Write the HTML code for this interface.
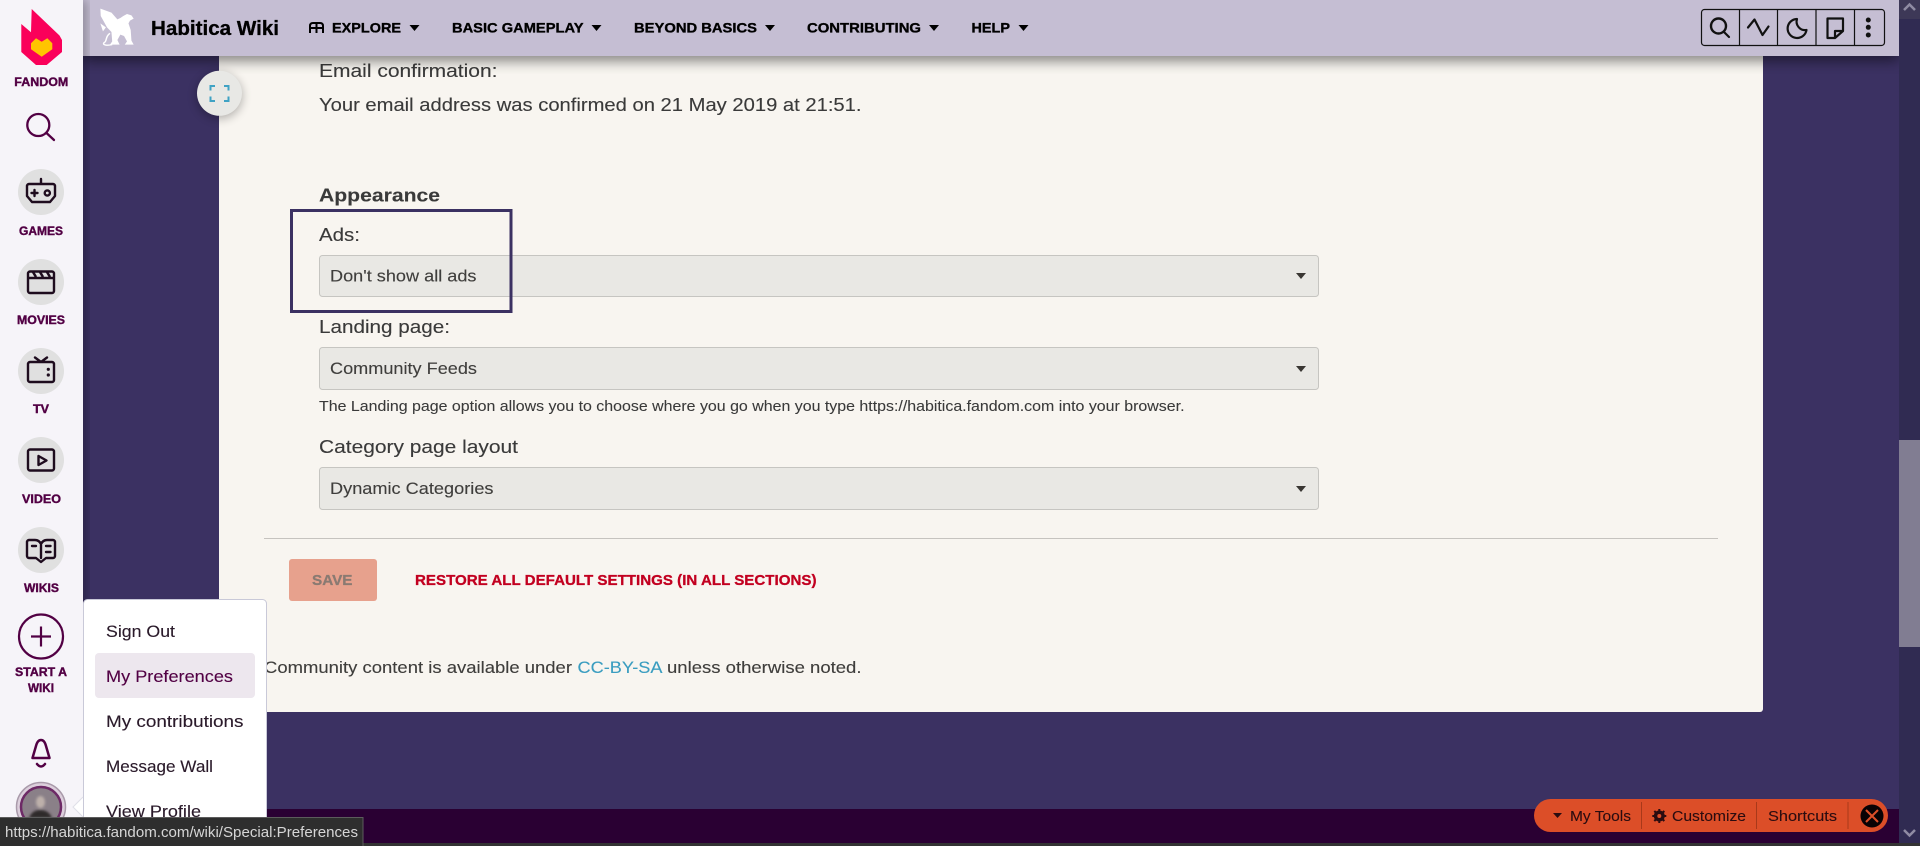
<!DOCTYPE html>
<html lang="en"><head><meta charset="utf-8"><title>My Preferences - Habitica Wiki</title>
<style>
html,body{margin:0;padding:0;background:#3b3162;overflow:hidden;width:1920px;height:846px}
svg{display:block}
text{font-family:"Liberation Sans",sans-serif;white-space:pre}
.b{font-size:18px;fill:#3a3a3a;stroke:#3a3a3a;stroke-width:.12}
.s{font-size:16.5px;fill:#3f3e3c;stroke:#3f3e3c;stroke-width:.12}
.n{font-size:14px;font-weight:700;fill:#000;stroke:#000;stroke-width:.35}
.l{font-size:12px;font-weight:700;fill:#520044;stroke:#520044;stroke-width:.4;text-anchor:start}
.d{font-size:16.5px;fill:#2a1a2a;stroke:#2a1a2a;stroke-width:.12}
.t{font-size:15px;fill:#2a0c10;stroke:#2a0c10;stroke-width:.1}
.i{fill:none;stroke:#1e0c1e;stroke-width:2.400;stroke-linecap:round;stroke-linejoin:round}
.k{fill:none;stroke:#111;stroke-width:2.200;stroke-linecap:round;stroke-linejoin:round}
</style></head><body>
<svg xmlns="http://www.w3.org/2000/svg" width="1920" height="846" viewBox="0 0 1920 846">
<defs>
<filter id="sh" x="-20%" y="-50%" width="140%" height="250%"><feGaussianBlur stdDeviation="7"/></filter>
<filter id="sh2" x="-50%" y="-50%" width="200%" height="200%"><feGaussianBlur stdDeviation="5"/></filter>
<filter id="bl" x="-30%" y="-30%" width="160%" height="160%"><feGaussianBlur stdDeviation="1.200"/></filter>
</defs>
<rect width="1920" height="846" fill="#3b3162"/>
<!-- panel -->
<rect x="219" y="0" width="1544" height="712" rx="3" fill="#f8f5f0"/>
<!-- footer band -->
<rect x="83" y="809" width="1816" height="34" fill="#2a0033"/>
<!-- content -->
<text class="b" x="319" y="77" textLength="178.500" lengthAdjust="spacingAndGlyphs">Email confirmation:</text>
<text class="b" x="319" y="111" textLength="542.500" lengthAdjust="spacingAndGlyphs">Your email address was confirmed on 21 May 2019 at 21:51.</text>
<text class="b" x="319" y="201.500" font-weight="700" textLength="121" lengthAdjust="spacingAndGlyphs">Appearance</text>
<text class="b" x="319" y="241" textLength="41" lengthAdjust="spacingAndGlyphs">Ads:</text>
<rect x="319.500" y="255.500" width="999" height="41" rx="3" fill="#e9e8e4" stroke="#c6c5c1"/>
<text class="s" x="330" y="281.500" textLength="146.500" lengthAdjust="spacingAndGlyphs">Don't show all ads</text>
<path d="M1296,273 h10 l-5,6 z" fill="#3a3733"/>
<text class="b" x="319" y="333" textLength="131" lengthAdjust="spacingAndGlyphs">Landing page:</text>
<rect x="319.500" y="347.500" width="999" height="42" rx="3" fill="#e9e8e4" stroke="#c6c5c1"/>
<text class="s" x="330" y="374" textLength="147" lengthAdjust="spacingAndGlyphs">Community Feeds</text>
<path d="M1296,366 h10 l-5,6 z" fill="#3a3733"/>
<text x="319" y="411" font-size="14.500" fill="#3a3a3a" stroke="#3a3a3a" stroke-width=".08" textLength="865.500" lengthAdjust="spacingAndGlyphs">The Landing page option allows you to choose where you go when you type https://habitica.fandom.com into your browser.</text>
<text class="b" x="319" y="453" textLength="199" lengthAdjust="spacingAndGlyphs">Category page layout</text>
<rect x="319.500" y="467.500" width="999" height="42" rx="3" fill="#e9e8e4" stroke="#c6c5c1"/>
<text class="s" x="330" y="494" textLength="163.500" lengthAdjust="spacingAndGlyphs">Dynamic Categories</text>
<path d="M1296,486 h10 l-5,6 z" fill="#3a3733"/>
<rect x="291.500" y="210.500" width="219.500" height="101" fill="none" stroke="#3b3162" stroke-width="3"/>
<rect x="264" y="538" width="1454" height="1" fill="#c6c3bf"/>
<rect x="289" y="559" width="88" height="42" rx="3" fill="#e7a18d"/>
<text x="312" y="585" font-size="15" font-weight="700" fill="#8a7a72" stroke="#8a7a72" stroke-width=".3" textLength="40.500" lengthAdjust="spacingAndGlyphs">SAVE</text>
<text x="415" y="585" font-size="15" font-weight="700" fill="#c20020" stroke="#c20020" stroke-width=".3" textLength="401.500" lengthAdjust="spacingAndGlyphs">RESTORE ALL DEFAULT SETTINGS (IN ALL SECTIONS)</text>
<text class="s" x="264" y="673" textLength="308" lengthAdjust="spacingAndGlyphs">Community content is available under</text>
<text class="s" x="577.500" y="673" style="fill:#3a9dc0;stroke:#3a9dc0" textLength="85" lengthAdjust="spacingAndGlyphs">CC-BY-SA</text>
<text class="s" x="667" y="673" textLength="194.500" lengthAdjust="spacingAndGlyphs">unless otherwise noted.</text>
<!-- header -->
<rect x="83" y="46" width="1816" height="14" fill="#000" opacity=".55" filter="url(#sh)"/>
<rect x="83" y="0" width="1816" height="56" fill="#c5bed3"/>
<g transform="translate(90,4) scale(.37,.3333)">
<path d="M28,14 L58,26 L74,46 L82,42 L90,36 L100,30 L112,34 L118,44 L108,50 L104,58 L110,78 L112,110 L118,122 L94,122 L100,112 L92,96 L82,92 L74,108 L80,122 L54,122 L60,112 L58,84 L46,70 L36,50 L29,36 Z" fill="#fff"/>
<path d="M28,58 L43,70 L35,82 Z" fill="#fff"/>
<path d="M54,88 C40,98 47,112 38,116 C32,124 48,125 60,122" fill="none" stroke="#fff" stroke-width="4"/>
</g>
<text x="151" y="35" font-size="20" font-weight="700" fill="#000" stroke="#000" stroke-width=".3" textLength="128" lengthAdjust="spacingAndGlyphs">Habitica Wiki</text>
<path d="M310,33 V26 Q310,23 313,23 H320 Q323,23 323,26 V33 M316.500,24 V33 M310,28 H323" fill="none" stroke="#000" stroke-width="2"/>
<text class="n" x="332" y="32.700" textLength="69" lengthAdjust="spacingAndGlyphs">EXPLORE</text>
<path d="M409.500,25 h10 l-5,6 z" fill="#000"/>
<text class="n" x="452" y="32.700" textLength="131.500" lengthAdjust="spacingAndGlyphs">BASIC GAMEPLAY</text>
<path d="M591.500,25 h10 l-5,6 z" fill="#000"/>
<text class="n" x="634" y="32.700" textLength="123" lengthAdjust="spacingAndGlyphs">BEYOND BASICS</text>
<path d="M765,25 h10 l-5,6 z" fill="#000"/>
<text class="n" x="807" y="32.700" textLength="114" lengthAdjust="spacingAndGlyphs">CONTRIBUTING</text>
<path d="M929,25 h10 l-5,6 z" fill="#000"/>
<text class="n" x="971.500" y="32.700" textLength="38.500" lengthAdjust="spacingAndGlyphs">HELP</text>
<path d="M1018.500,25 h10 l-5,6 z" fill="#000"/>
<!-- toolbar -->
<rect x="1701.500" y="9.500" width="183" height="36" rx="3" fill="none" stroke="#111" stroke-width="1.200"/>
<path d="M1739.500,9 V45 M1777.500,9 V45 M1816,9 V45 M1854.500,9 V45" stroke="#111" stroke-width="1.200"/>
<circle cx="1718.500" cy="26" r="7.500" class="k" style="stroke-width:2.400"/>
<path d="M1724,32 L1729,37" class="k"/>
<path d="M1748,27.500 L1754.500,19.500 L1762.500,35 L1768.500,26.500" class="k"/>
<path d="M1797,19 A9.500,9.500 0 1 0 1806.500,30 A8.500,8.500 0 0 1 1797,19 Z" class="k"/>
<path d="M1827.500,18.500 H1843 V31 L1835,38 H1827.500 Z M1843,31 H1835 V38" class="k"/>
<circle cx="1868.300" cy="20" r="2.500" fill="#111"/><circle cx="1868.300" cy="27.300" r="2.500" fill="#111"/><circle cx="1868.300" cy="35" r="2.500" fill="#111"/>
<!-- expand -->
<circle cx="219.500" cy="96" r="22.500" fill="#000" opacity=".3" filter="url(#sh2)"/>
<circle cx="219.500" cy="93.300" r="22.500" fill="#e8e8e5"/>
<path d="M215,86 H210.500 V90.500 M224,86 H228.500 V90.500 M215,101 H210.500 V96.500 M224,101 H228.500 V96.500" fill="none" stroke="#3fa2c4" stroke-width="2"/>
<!-- scrollbar -->
<rect x="1899" y="0" width="21" height="846" fill="#302b52"/>
<rect x="1899" y="0" width="21" height="19" fill="#3d3857"/>
<path d="M1904,10 L1909.500,4.500 L1915,10" fill="none" stroke="#8f8ba3" stroke-width="2.500"/>
<rect x="1899" y="440" width="21" height="207" fill="#817d92"/>
<path d="M1904,830 L1909.500,835.500 L1915,830" fill="none" stroke="#8f8ba3" stroke-width="2.500"/>
<rect x="0" y="843" width="1920" height="3" fill="#333"/>
<!-- pill -->
<rect x="1534" y="799" width="354" height="33" rx="16.500" fill="#dc4e28"/>
<path d="M1553,813 h9 l-4.500,5 z" fill="#2a0c10"/>
<text class="t" x="1570" y="821" textLength="61" lengthAdjust="spacingAndGlyphs">My Tools</text>
<path d="M1641.500,802 V829 M1756.500,802 V829 M1848,802 V829" stroke="#a8391a" stroke-width="1"/>
<circle cx="1659.300" cy="816" r="4" fill="none" stroke="#2a0c10" stroke-width="3"/>
<path d="M1659.300,809 V823 M1652.300,816 H1666.300 M1654.300,811 L1664.300,821 M1664.300,811 L1654.300,821" stroke="#2a0c10" stroke-width="2"/>
<circle cx="1659.300" cy="816" r="2" fill="#dc4e28"/>
<text class="t" x="1672" y="821" textLength="74" lengthAdjust="spacingAndGlyphs">Customize</text>
<text class="t" x="1768" y="821" textLength="69" lengthAdjust="spacingAndGlyphs">Shortcuts</text>
<circle cx="1872" cy="816" r="11.500" fill="#0a0204"/>
<path d="M1866,810 L1878,822 M1878,810 L1866,822" stroke="#dc4e28" stroke-width="2"/>
<!-- sidebar -->
<rect x="78" y="0" width="8" height="846" fill="#000" opacity=".35" filter="url(#sh2)"/>
<rect x="0" y="0" width="83" height="846" fill="#f6f4f9"/>
<path d="M31.700,9 L59.500,35.500 L62,40 V52 L46.700,65 H36 L21.300,52 V24 L31,32.300 Z" fill="#fa005a"/>
<path d="M31,43.300 L36,38.300 L41.700,41.700 L47.300,38.300 L52.300,43.300 V49.300 L41.700,56.700 L31,49.300 Z" fill="#ffc500"/>
<text class="l" x="14.300" y="86" textLength="54" lengthAdjust="spacingAndGlyphs">FANDOM</text>
<circle cx="38.300" cy="125" r="11" fill="none" stroke="#520044" stroke-width="2.300"/>
<path d="M46.500,133 L54,140" stroke="#520044" stroke-width="2.300" stroke-linecap="round"/>
<g fill="#e0e0e0"><circle cx="41" cy="192" r="23"/><circle cx="41" cy="282" r="23"/><circle cx="41" cy="371" r="23"/><circle cx="41" cy="460" r="23"/><circle cx="41" cy="550" r="23"/></g>
<path class="i" d="M29,184 H53 A2,2 0 0 1 55,186 V196 L50,202 H32 L27,196 V186 A2,2 0 0 1 29,184 Z M41,179 V184 M31.500,193 H37.500 M34.500,190 V196"/>
<circle cx="47.300" cy="193" r="2.600" class="i"/>
<text class="l" x="19" y="235" textLength="44" lengthAdjust="spacingAndGlyphs">GAMES</text>
<path class="i" d="M30,271.500 H52 A2,2 0 0 1 54,273.500 V291 A2,2 0 0 1 52,293 H30 A2,2 0 0 1 28,291 V273.500 A2,2 0 0 1 30,271.500 Z M28,278 H54"/>
<path d="M33,272 L36,277 M40,272 L43,277 M47,272 L50,277" stroke="#1e0c1e" stroke-width="2.500"/>
<text class="l" x="17" y="324" textLength="48" lengthAdjust="spacingAndGlyphs">MOVIES</text>
<path class="i" d="M30,362 H52 A2,2 0 0 1 54,364 V380 A2,2 0 0 1 52,382 H30 A2,2 0 0 1 28,380 V364 A2,2 0 0 1 30,362 Z M35,357.500 L41,362 L47,357.500"/>
<circle cx="48.300" cy="369.300" r="1.600" fill="#1e0c1e"/><circle cx="48.300" cy="375" r="1.600" fill="#1e0c1e"/>
<text class="l" x="33" y="413" textLength="16" lengthAdjust="spacingAndGlyphs">TV</text>
<path class="i" d="M30,449.500 H52 A2,2 0 0 1 54,451.500 V468.500 A2,2 0 0 1 52,470.500 H30 A2,2 0 0 1 28,468.500 V451.500 A2,2 0 0 1 30,449.500 Z M38.500,456 V465 L46.500,460.500 Z"/>
<text class="l" x="22" y="503" textLength="39" lengthAdjust="spacingAndGlyphs">VIDEO</text>
<path class="i" d="M41,544 Q39,540 35,540 H29 A2,2 0 0 0 27,542 V556 A2,2 0 0 0 29,558 H36 L41,562 L46,558 H53 A2,2 0 0 0 55,556 V542 A2,2 0 0 0 53,540 H47 Q43,540 41,544 V558 M32,546 H36 M46,546 H50.500 M46,552 H50.500"/>
<text class="l" x="24" y="592" textLength="35" lengthAdjust="spacingAndGlyphs">WIKIS</text>
<circle cx="41" cy="636.500" r="22" fill="none" stroke="#520044" stroke-width="2.200"/>
<path d="M31,636.500 H51 M41,626.500 V646.500" stroke="#520044" stroke-width="2.200"/>
<text class="l" x="15" y="676" textLength="52" lengthAdjust="spacingAndGlyphs">START A</text>
<text class="l" x="28" y="692" textLength="26" lengthAdjust="spacingAndGlyphs">WIKI</text>
<path d="M32.500,758 L36,746 Q37.500,740 41,740 Q44.500,740 46,746 L49.500,758 Z M37,764 Q41,769 45,764" fill="none" stroke="#520044" stroke-width="2.500" stroke-linejoin="round" stroke-linecap="round"/>
<circle cx="41" cy="807" r="24.500" fill="#dccfdc" stroke="#a99aaa" stroke-width="1.500"/>
<circle cx="41" cy="807" r="20" fill="#8a8088" stroke="#6d2a66" stroke-width="2.500"/>
<g filter="url(#bl)">
<ellipse cx="40.500" cy="802" rx="4.500" ry="6" fill="#bdb0aa"/>
<path d="M29,818 Q32,810 40,810 Q49,810 52,818 Z" fill="#2e2a2a"/>
</g>
<!-- dropdown -->
<rect x="83.500" y="599.500" width="183" height="260" rx="4" fill="#fff" stroke="#c9c9d8"/>
<path d="M83,797 L73,807 L83,817 Z" fill="#fff"/>
<path d="M83,797 L73,807 L83,817" fill="none" stroke="#dfdfe8"/>
<rect x="95" y="653" width="160" height="45" rx="4" fill="#ede7ee"/>
<text class="d" x="106" y="637" textLength="69" lengthAdjust="spacingAndGlyphs">Sign Out</text>
<text class="d" x="106" y="682" style="fill:#520044;stroke:#520044" textLength="127" lengthAdjust="spacingAndGlyphs">My Preferences</text>
<text class="d" x="106" y="727" textLength="137.500" lengthAdjust="spacingAndGlyphs">My contributions</text>
<text class="d" x="106" y="772" textLength="107" lengthAdjust="spacingAndGlyphs">Message Wall</text>
<text class="d" x="106" y="817" textLength="95" lengthAdjust="spacingAndGlyphs">View Profile</text>
<!-- status tooltip -->
<rect x="-1" y="817.500" width="364" height="30" fill="#2e2e2e" stroke="#5c5c5c"/>
<text x="5" y="837" font-size="14.500" fill="#d6d6d6" textLength="353" lengthAdjust="spacingAndGlyphs">https://habitica.fandom.com/wiki/Special:Preferences</text>
</svg>
</body></html>
